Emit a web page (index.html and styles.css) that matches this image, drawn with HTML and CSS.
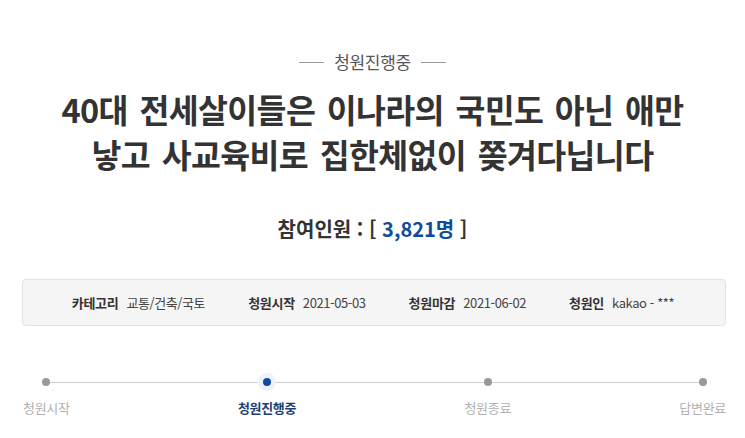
FILE: index.html
```html
<!DOCTYPE html>
<html lang="ko">
<head>
<meta charset="utf-8">
<link rel="stylesheet" href="styles.css">
</head>
<body>
<div class="page">
  <div class="status"><span class="rule"></span><span class="status-text">청원진행중</span><span class="rule"></span></div>
  <h1 class="title">40대 전세살이들은 이나라의 국민도 아닌 애만<br>낳고 사교육비로 집한체없이 쫒겨다닙니다</h1>
  <div class="count">참여인원 : [ <span class="num">3,821명</span> ]</div>
  <div class="info">
    <div class="item"><span class="label">카테고리</span><span class="value">교통/건축/국토</span></div>
    <div class="item"><span class="label">청원시작</span><span class="value">2021-05-03</span></div>
    <div class="item"><span class="label">청원마감</span><span class="value">2021-06-02</span></div>
    <div class="item"><span class="label">청원인</span><span class="value">kakao - ***</span></div>
  </div>
  <div class="steps">
    <div class="step"><span class="dot"></span><span class="step-label">청원시작</span></div>
    <div class="step active"><span class="dot"></span><span class="step-label">청원진행중</span></div>
    <div class="step"><span class="dot"></span><span class="step-label">청원종료</span></div>
    <div class="step"><span class="dot"></span><span class="step-label">답변완료</span></div>
  </div>
</div>
</body>
</html>
```
FILE: styles.css
```css
html, body {
  margin: 0;
  padding: 0;
  background: #fff;
}
body {
  font-family: "Noto Sans CJK KR", "Noto Sans", sans-serif;
  color: #333;
}
.page {
  width: 745px;
  padding-top: 50px;
}
.status {
  display: flex;
  justify-content: center;
  align-items: center;
  gap: 10px;
  height: 24px;
}
.rule {
  width: 25px;
  height: 1px;
  background: #9a9a9a;
}
.status-text {
  font-size: 17px;
  line-height: 24px;
  color: #555;
  letter-spacing: -0.3px;
}
.title {
  margin: 12px 0 0;
  text-align: center;
  font-size: 32.5px;
  line-height: 45px;
  font-weight: 700;
  color: #333;
  letter-spacing: -0.6px;
  word-spacing: 3px;
}
.count {
  margin-top: 38px;
  text-align: center;
  font-size: 20px;
  line-height: 30px;
  font-weight: 700;
  color: #333;
}
.num {
  color: #0f4c9c;
}
.info {
  margin: 35px 19px 0 22px;
  height: 45px;
  background: #f5f5f5;
  border: 1px solid #e3e3e3;
  border-radius: 4px;
  display: flex;
  justify-content: center;
  align-items: center;
  gap: 43px;
  font-size: 13px;
  padding-right: 2px;
}
.item {
  display: flex;
  align-items: center;
  gap: 8px;
}
.label {
  font-weight: 700;
  color: #333;
  letter-spacing: -0.3px;
}
.value {
  color: #444;
  letter-spacing: -0.4px;
}
.steps {
  margin: 52px 19px 0 23px;
  display: flex;
  justify-content: space-between;
  position: relative;
}
.steps::before {
  content: "";
  position: absolute;
  left: 22px;
  right: 23px;
  top: 4px;
  height: 1px;
  background: #cfcfcf;
}
.step {
  display: flex;
  flex-direction: column;
  align-items: center;
  position: relative;
}
.dot {
  width: 8px;
  height: 8px;
  border-radius: 50%;
  background: #999;
}
.step.active .dot {
  background: #0f4c9c;
  box-shadow: 0 0 0 5px #eef3fb;
}
.step-label {
  margin-top: 13px;
  font-size: 13px;
  line-height: 18px;
  color: #b0b0b0;
  letter-spacing: -0.3px;
}
.step.active .step-label {
  color: #1d3f73;
  font-weight: 700;
}
```
